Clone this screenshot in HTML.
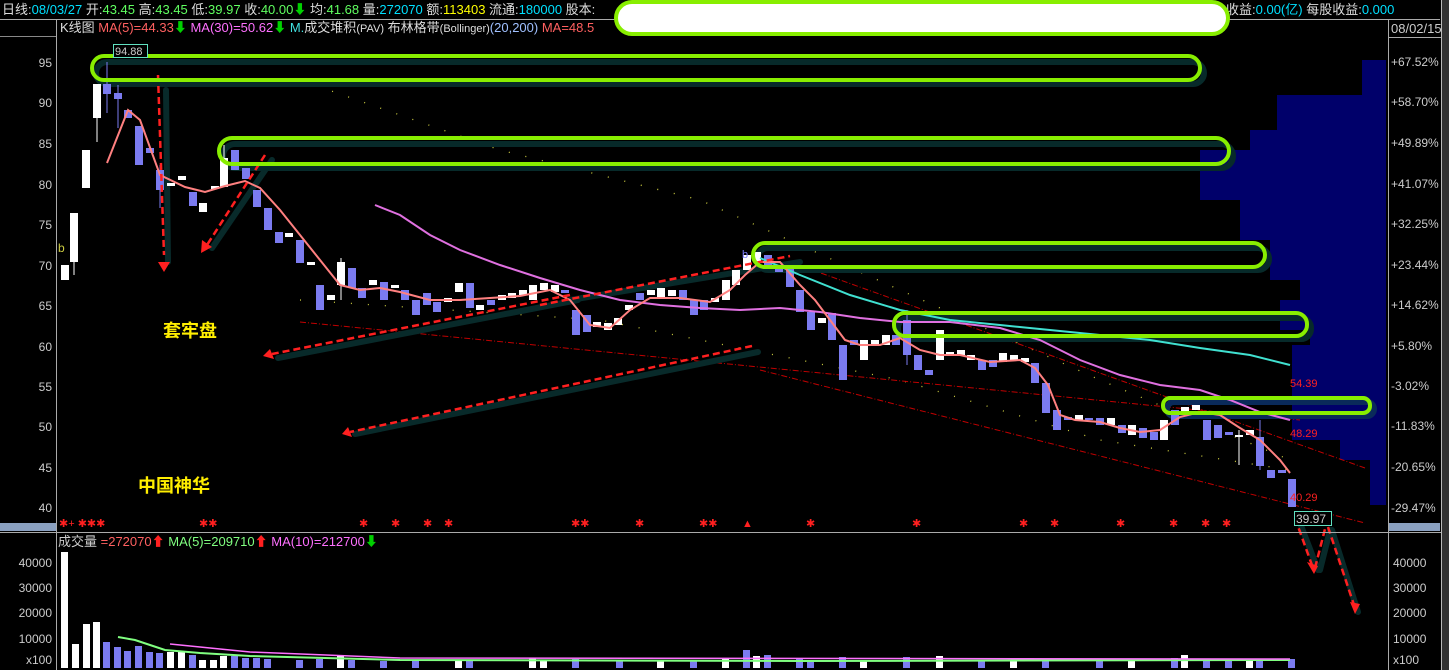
<!DOCTYPE html>
<html><head><meta charset="utf-8"><style>
html,body{margin:0;padding:0;background:#000;width:1449px;height:670px;overflow:hidden;font-family:"Liberation Sans","Noto Sans CJK SC",sans-serif}
svg{position:absolute;left:0;top:0}
</style></head><body>
<svg width="1449" height="670" xmlns="http://www.w3.org/2000/svg" font-family="Liberation Sans, Noto Sans CJK SC, sans-serif">
<rect width="1449" height="670" fill="#000"/>
<text x="2" y="14" font-size="13" fill="#ddd">日线:<tspan fill="#00e0ff">08/03/27</tspan> 开:<tspan fill="#60ff60">43.45</tspan> 高:<tspan fill="#60ff60">43.45</tspan> 低:<tspan fill="#60ff60">39.97</tspan> 收:<tspan fill="#60ff60">40.00</tspan><tspan fill="#00d000">⬇</tspan> 均:<tspan fill="#60ff60">41.68</tspan> 量:<tspan fill="#00e0ff">272070</tspan> 额:<tspan fill="#ffff00">113403</tspan> 流通:<tspan fill="#00e0ff">180000</tspan> 股本:</text>
<text x="1226" y="14" font-size="13" fill="#ddd">收益:<tspan fill="#00e0ff">0.00(亿)</tspan> 每股收益:<tspan fill="#00e0ff">0.000</tspan></text>
<line x1="0" y1="19.5" x2="1440" y2="19.5" stroke="#aaa"/>
<rect x="1441" y="0" width="8" height="670" fill="#333"/>
<line x1="1441.5" y1="0" x2="1441.5" y2="670" stroke="#bbb"/>
<line x1="56.5" y1="19" x2="56.5" y2="670" stroke="#aaa"/>
<line x1="0" y1="36.5" x2="56" y2="36.5" stroke="#888"/>
<line x1="1388.5" y1="19" x2="1388.5" y2="670" stroke="#aaa"/>
<line x1="1388" y1="37.5" x2="1441" y2="37.5" stroke="#aaa"/>
<text x="1391" y="33" font-size="13" fill="#ccc">08/02/15</text>
<polygon fill="#00006a" points="1362,60 1362,95 1277,95 1277,130 1250,130 1250,150 1200,150 1200,200 1240,200 1240,240 1270,240 1270,280 1300,280 1300,300 1280,300 1280,330 1310,330 1310,345 1292,345 1292,440 1340,440 1340,460 1370,460 1370,505 1386,505 1386,60"/>
<g font-size="12" fill="#ccc" text-anchor="end">
<text x="52" y="67">95</text><text x="52" y="107">90</text><text x="52" y="148">85</text><text x="52" y="189">80</text><text x="52" y="229">75</text><text x="52" y="270">70</text><text x="52" y="310">65</text><text x="52" y="351">60</text><text x="52" y="391">55</text><text x="52" y="431">50</text><text x="52" y="472">45</text><text x="52" y="512">40</text>
</g>
<g font-size="12" fill="#ccc">
<text x="1391" y="66">+67.52%</text><text x="1391" y="106">+58.70%</text><text x="1391" y="147">+49.89%</text><text x="1391" y="188">+41.07%</text><text x="1391" y="228">+32.25%</text><text x="1391" y="269">+23.44%</text><text x="1391" y="309">+14.62%</text><text x="1391" y="350">+5.80%</text><text x="1391" y="390">-3.02%</text><text x="1391" y="430">-11.83%</text><text x="1391" y="471">-20.65%</text><text x="1391" y="512">-29.47%</text>
</g>
<rect x="0" y="523" width="56" height="8" fill="#8aa0c0"/>
<rect x="1389" y="523" width="51" height="8" fill="#8aa0c0"/>
<text x="60" y="32" font-size="13" fill="#ddd">K线图 <tspan fill="#ff6060">MA(5)=44.33</tspan><tspan fill="#00d000">⬇</tspan> <tspan fill="#ff70ff">MA(30)=50.62</tspan><tspan fill="#00d000">⬇</tspan> <tspan fill="#40e0e0">M.</tspan>成交堆积<tspan font-size="11">(PAV)</tspan>   布林格带<tspan font-size="11">(Bollinger)</tspan><tspan fill="#a0c0ff">(20,200)</tspan> <tspan fill="#ff6060">MA=48.5</tspan></text>
<g stroke="#cccc40" stroke-width="1.3" stroke-dasharray="1 16" fill="none">
<polyline points="300,80 500,150 700,200 900,290 1100,380 1290,460"/>
<polyline points="300,300 600,320 900,380 1100,440 1290,470"/>
</g>
<g stroke="#c00000" stroke-width="1" stroke-dasharray="6 2 1 2" fill="none">
<line x1="300" y1="322" x2="1300" y2="420"/>
<line x1="760" y1="370" x2="1365" y2="523"/>
<line x1="790" y1="262" x2="1365" y2="468"/>
</g>
<g stroke="#082a2a" stroke-width="6" stroke-linecap="round" fill="none">
<line x1="166" y1="90" x2="168" y2="262"/><line x1="272" y1="160" x2="212" y2="248"/><line x1="578" y1="300" x2="278" y2="358"/><line x1="758" y1="352" x2="355" y2="434"/><line x1="570" y1="300" x2="800" y2="262"/><line x1="1300" y1="523" x2="1318" y2="570"/><line x1="1320" y1="570" x2="1330" y2="530"/><line x1="1332" y1="530" x2="1358" y2="612"/>
</g>
<g fill="none" stroke="#072a2a" stroke-width="6">
<rect x="96" y="62" width="1108" height="22" rx="11"/>
<rect x="223" y="144" width="1010" height="24" rx="12"/>
<rect x="757" y="248" width="512" height="22" rx="11"/>
<rect x="898" y="318" width="413" height="21" rx="10"/>
<rect x="1167" y="402" width="207" height="14" rx="7" stroke="#0a2a5a"/>
</g>
<g fill="#fff">
<rect x="61" y="265" width="8" height="15"/><rect x="70" y="213" width="8" height="49"/><rect x="82" y="150" width="8" height="38"/><rect x="93" y="84" width="8" height="34"/>
<rect x="167" y="183" width="8" height="3"/><rect x="178" y="176" width="8" height="4"/><rect x="199" y="203" width="8" height="9"/><rect x="211" y="186" width="8" height="3"/><rect x="220" y="158" width="8" height="29"/><rect x="285" y="233" width="8" height="4"/><rect x="307" y="262" width="8" height="3"/><rect x="327" y="295" width="8" height="5"/><rect x="337" y="262" width="8" height="23"/><rect x="369" y="280" width="8" height="5"/><rect x="391" y="285" width="8" height="3"/><rect x="444" y="298" width="8" height="4"/><rect x="455" y="283" width="8" height="9"/><rect x="476" y="305" width="8" height="5"/><rect x="498" y="295" width="8" height="5"/><rect x="508" y="293" width="8" height="5"/><rect x="519" y="290" width="8" height="5"/><rect x="529" y="285" width="8" height="15"/><rect x="540" y="283" width="8" height="7"/><rect x="551" y="285" width="8" height="7"/><rect x="593" y="322" width="8" height="5"/><rect x="604" y="323" width="8" height="7"/><rect x="614" y="318" width="8" height="7"/><rect x="625" y="305" width="8" height="5"/><rect x="647" y="290" width="8" height="5"/><rect x="657" y="288" width="8" height="10"/><rect x="668" y="290" width="8" height="6"/><rect x="711" y="298" width="8" height="4"/><rect x="722" y="280" width="8" height="20"/><rect x="732" y="270" width="8" height="15"/><rect x="743" y="255" width="8" height="15"/><rect x="753" y="252" width="8" height="10"/><rect x="818" y="318" width="8" height="5"/><rect x="860" y="340" width="8" height="20"/><rect x="871" y="340" width="8" height="5"/><rect x="882" y="335" width="8" height="10"/><rect x="936" y="330" width="8" height="30"/><rect x="946" y="352" width="8" height="3"/><rect x="957" y="350" width="8" height="5"/><rect x="967" y="355" width="8" height="5"/><rect x="999" y="353" width="8" height="9"/><rect x="1010" y="355" width="8" height="5"/><rect x="1021" y="358" width="8" height="4"/><rect x="1075" y="415" width="8" height="5"/><rect x="1107" y="418" width="8" height="7"/><rect x="1128" y="425" width="8" height="10"/><rect x="1160" y="420" width="8" height="20"/><rect x="1181" y="407" width="8" height="6"/><rect x="1192" y="405" width="8" height="5"/><rect x="1235" y="435" width="8" height="2"/><rect x="1246" y="430" width="8" height="5"/>
</g>
<g fill="#7b7bf0">
<rect x="103" y="84" width="8" height="10"/><rect x="114" y="93" width="8" height="6"/><rect x="124" y="110" width="8" height="8"/><rect x="135" y="126" width="8" height="39"/><rect x="146" y="148" width="8" height="5"/><rect x="156" y="170" width="8" height="20"/><rect x="189" y="192" width="8" height="14"/><rect x="231" y="150" width="8" height="20"/><rect x="242" y="168" width="8" height="11"/><rect x="253" y="190" width="8" height="17"/><rect x="264" y="208" width="8" height="22"/><rect x="275" y="232" width="8" height="11"/><rect x="296" y="240" width="8" height="23"/><rect x="316" y="285" width="8" height="25"/><rect x="348" y="268" width="8" height="20"/><rect x="358" y="288" width="8" height="10"/><rect x="380" y="282" width="8" height="18"/><rect x="401" y="290" width="8" height="10"/><rect x="412" y="300" width="8" height="15"/><rect x="423" y="293" width="8" height="12"/><rect x="433" y="302" width="8" height="10"/><rect x="466" y="283" width="8" height="25"/><rect x="487" y="300" width="8" height="5"/><rect x="561" y="290" width="8" height="3"/><rect x="572" y="310" width="8" height="25"/><rect x="583" y="315" width="8" height="17"/><rect x="636" y="293" width="8" height="7"/><rect x="679" y="290" width="8" height="10"/><rect x="690" y="300" width="8" height="15"/><rect x="700" y="300" width="8" height="10"/><rect x="764" y="255" width="8" height="10"/><rect x="775" y="265" width="8" height="7"/><rect x="786" y="268" width="8" height="19"/><rect x="796" y="290" width="8" height="22"/><rect x="807" y="312" width="8" height="18"/><rect x="828" y="313" width="8" height="27"/><rect x="839" y="345" width="8" height="35"/><rect x="850" y="340" width="8" height="5"/><rect x="892" y="335" width="8" height="10"/><rect x="903" y="320" width="8" height="35"/><rect x="914" y="355" width="8" height="15"/><rect x="925" y="370" width="8" height="5"/><rect x="978" y="360" width="8" height="10"/><rect x="989" y="360" width="8" height="7"/><rect x="1031" y="363" width="8" height="20"/><rect x="1042" y="383" width="8" height="30"/><rect x="1053" y="410" width="8" height="20"/><rect x="1064" y="417" width="8" height="3"/><rect x="1085" y="418" width="8" height="2"/><rect x="1096" y="418" width="8" height="7"/><rect x="1118" y="425" width="8" height="8"/><rect x="1139" y="428" width="8" height="10"/><rect x="1150" y="432" width="8" height="8"/><rect x="1171" y="410" width="8" height="15"/><rect x="1203" y="420" width="8" height="20"/><rect x="1214" y="425" width="8" height="13"/><rect x="1225" y="432" width="8" height="3"/><rect x="1256" y="437" width="8" height="29"/><rect x="1267" y="470" width="8" height="8"/><rect x="1278" y="470" width="8" height="3"/><rect x="1288" y="479" width="8" height="28"/>
</g>
<g stroke="#fff" stroke-width="1"><line x1="97" y1="118" x2="97" y2="142"/><line x1="74" y1="262" x2="74" y2="275"/><line x1="224" y1="145" x2="224" y2="187"/><line x1="1239" y1="430" x2="1239" y2="465"/><line x1="341" y1="258" x2="341" y2="300"/></g>
<g stroke="#7b7bf0" stroke-width="1"><line x1="107" y1="62" x2="107" y2="113"/><line x1="118" y1="85" x2="118" y2="128"/><line x1="160" y1="165" x2="160" y2="208"/><line x1="907" y1="310" x2="907" y2="365"/><line x1="1260" y1="420" x2="1260" y2="470"/></g>
<polyline fill="none" stroke="#e070e0" stroke-width="2" points="375,205 400,215 430,235 460,250 500,265 540,278 580,290 620,300 660,305 700,308 740,310 780,308 820,312 860,318 900,322 950,322 1000,328 1040,340 1080,360 1120,375 1160,385 1200,390 1230,400 1260,412 1290,420"/>
<polyline fill="none" stroke="#40e0d0" stroke-width="2" points="760,258 800,275 850,295 900,310 950,320 1000,325 1050,330 1100,335 1150,340 1200,348 1250,355 1290,365"/>
<polyline fill="none" stroke="#ff8080" stroke-width="2" points="107,163 128,110 140,120 160,175 185,187 205,192 225,186 245,181 260,188 280,210 300,235 320,260 340,285 360,290 380,288 400,292 430,300 460,300 490,298 520,296 550,290 570,300 590,325 610,328 630,310 650,298 680,298 710,302 730,290 745,275 760,262 780,262 800,285 815,300 830,320 845,340 860,345 880,345 900,338 920,350 940,355 960,355 990,362 1020,360 1035,368 1048,385 1060,415 1075,420 1100,422 1120,428 1140,432 1160,430 1180,417 1200,412 1220,415 1240,428 1260,440 1280,460 1290,473"/>
<g stroke="#ff2020" stroke-width="2.5" stroke-dasharray="7 4" fill="none">
<line x1="158" y1="75" x2="164" y2="255"/><line x1="265" y1="155" x2="207" y2="245"/><line x1="570" y1="295" x2="272" y2="354"/><line x1="752" y1="346" x2="350" y2="432"/><line x1="540" y1="305" x2="790" y2="256"/><line x1="1295" y1="518" x2="1313" y2="568"/><line x1="1315" y1="568" x2="1326" y2="525"/><line x1="1328" y1="527" x2="1355" y2="608"/>
</g>
<g fill="#ff2020"><polygon points="158,262 170,262 164,272"/><polygon points="202,240 212,247 201,253"/><polygon points="270,349 274,359 263,356"/><polygon points="348,427 352,437 342,434"/><polygon points="1307,562 1318,566 1314,574"/><polygon points="1350,602 1360,604 1355,614"/></g>
<g fill="none">
<rect x="92" y="56" width="1108" height="24" rx="12" stroke="#88ee00" stroke-width="4"/>
<rect x="219" y="138" width="1010" height="26" rx="13" stroke="#88ee00" stroke-width="4"/>
<rect x="753" y="243" width="512" height="24" rx="12" stroke="#88ee00" stroke-width="4"/>
<rect x="894" y="313" width="413" height="23" rx="11" stroke="#88ee00" stroke-width="4"/>
<rect x="1163" y="398" width="207" height="15" rx="7" stroke="#88ee00" stroke-width="4"/>
</g>
<rect x="616" y="2" width="612" height="32" rx="16" fill="#fff" stroke="#88ee00" stroke-width="4"/>
<rect x="113.5" y="44.5" width="34" height="13" fill="#000" stroke="#60e0c0"/>
<text x="115" y="55" font-size="11" fill="#ccc">94.88</text>
<rect x="1294.5" y="511.5" width="37" height="14" fill="#000" stroke="#60e0c0"/>
<text x="1296" y="523" font-size="12" fill="#ccc">39.97</text>
<g font-size="11" fill="#ff2020"><text x="1290" y="387">54.39</text><text x="1290" y="437">48.29</text><text x="1290" y="501">40.29</text></g>
<text x="58" y="252" font-size="12" fill="#cccc40">b</text>
<text x="742" y="258" font-size="11" fill="#8080ff">b</text>
<g font-size="18" font-weight="bold" fill="#ffee00"><text x="163" y="337">套牢盘</text><text x="138" y="492">中国神华</text></g>
<g font-size="11" fill="#ff2020"><text x="59" y="527">✱+ ✱✱✱</text><text x="199" y="527">✱✱</text><text x="359" y="527">✱</text><text x="391" y="527">✱</text><text x="423" y="527">✱</text><text x="444" y="527">✱</text><text x="571" y="527">✱✱</text><text x="635" y="527">✱</text><text x="699" y="527">✱✱</text><text x="742" y="527">▲</text><text x="806" y="527">✱</text><text x="912" y="527">✱</text><text x="1019" y="527">✱</text><text x="1050" y="527">✱</text><text x="1116" y="527">✱</text><text x="1169" y="527">✱</text><text x="1201" y="527">✱</text><text x="1222" y="527">✱</text></g>
<line x1="0" y1="532.5" x2="1441" y2="532.5" stroke="#aaa"/>
<text x="58" y="546" font-size="13" fill="#ccc">成交量 <tspan fill="#ff6060">=272070</tspan><tspan fill="#ff2020">⬆</tspan> <tspan fill="#80ff80">MA(5)=209710</tspan><tspan fill="#ff2020">⬆</tspan> <tspan fill="#ff70ff">MA(10)=212700</tspan><tspan fill="#00d000">⬇</tspan></text>
<g font-size="12" fill="#ccc" text-anchor="end"><text x="52" y="567">40000</text><text x="52" y="592">30000</text><text x="52" y="617">20000</text><text x="52" y="643">10000</text><text x="52" y="664">x100</text></g>
<g font-size="12" fill="#ccc"><text x="1393" y="567">40000</text><text x="1393" y="592">30000</text><text x="1393" y="617">20000</text><text x="1393" y="643">10000</text><text x="1393" y="664">x100</text></g>
<g fill="#fff"><rect x="61" y="552" width="7" height="116"/><rect x="72" y="644" width="7" height="24"/><rect x="83" y="624" width="7" height="44"/><rect x="93" y="622" width="7" height="46"/><rect x="167" y="652" width="7" height="16"/><rect x="178" y="652" width="7" height="16"/><rect x="199" y="660" width="7" height="8"/><rect x="210" y="660" width="7" height="8"/><rect x="220" y="656" width="7" height="12"/><rect x="337" y="656" width="7" height="12"/><rect x="529" y="658" width="7" height="10"/><rect x="722" y="658" width="7" height="10"/><rect x="753" y="656" width="7" height="12"/><rect x="936" y="656" width="7" height="12"/><rect x="1181" y="655" width="7" height="13"/><rect x="1246" y="661" width="7" height="7"/><rect x="455" y="660" width="7" height="8"/><rect x="540" y="661" width="7" height="7"/><rect x="657" y="660" width="7" height="8"/><rect x="860" y="660" width="7" height="8"/><rect x="1010" y="660" width="7" height="8"/><rect x="1128" y="660" width="7" height="8"/></g>
<g fill="#7b7bf0"><rect x="103" y="642" width="7" height="26"/><rect x="114" y="647" width="7" height="21"/><rect x="124" y="651" width="7" height="17"/><rect x="135" y="646" width="7" height="22"/><rect x="146" y="652" width="7" height="16"/><rect x="156" y="653" width="7" height="15"/><rect x="189" y="655" width="7" height="13"/><rect x="231" y="656" width="7" height="12"/><rect x="242" y="658" width="7" height="10"/><rect x="253" y="658" width="7" height="10"/><rect x="264" y="659" width="7" height="9"/><rect x="296" y="660" width="7" height="8"/><rect x="316" y="659" width="7" height="9"/><rect x="348" y="660" width="7" height="8"/><rect x="380" y="661" width="7" height="7"/><rect x="412" y="660" width="7" height="8"/><rect x="466" y="660" width="7" height="8"/><rect x="572" y="659" width="7" height="9"/><rect x="690" y="660" width="7" height="8"/><rect x="743" y="650" width="7" height="18"/><rect x="764" y="655" width="7" height="13"/><rect x="796" y="658" width="7" height="10"/><rect x="839" y="657" width="7" height="11"/><rect x="903" y="657" width="7" height="11"/><rect x="1042" y="659" width="7" height="9"/><rect x="1171" y="658" width="7" height="10"/><rect x="1203" y="659" width="7" height="9"/><rect x="1256" y="660" width="7" height="8"/><rect x="1288" y="659" width="7" height="9"/><rect x="616" y="661" width="7" height="7"/><rect x="807" y="661" width="7" height="7"/><rect x="978" y="661" width="7" height="7"/><rect x="1096" y="661" width="7" height="7"/><rect x="1225" y="661" width="7" height="7"/></g>
<polyline fill="none" stroke="#80ff80" stroke-width="2" points="118,637 135,640 150,645 165,650 200,653 250,656 400,660 800,661 1290,660"/>
<polyline fill="none" stroke="#ff70ff" stroke-width="1.5" points="170,644 200,647 250,652 400,658 1290,659"/>
</svg>
</body></html>
